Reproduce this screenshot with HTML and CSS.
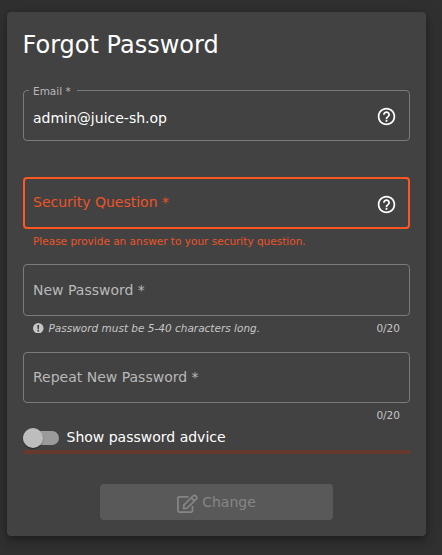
FILE: index.html
```html
<!DOCTYPE html>
<html lang="en">
<head>
<meta charset="utf-8">
<title>Forgot Password</title>
<link rel="stylesheet" href="styles.css">
</head>
<body>
<main class="card">
  <h1 class="title">Forgot Password</h1>
  <form class="form">
    <div class="field email">
      <span class="notch">Email *</span>
      <span class="value">admin@juice-sh.op</span>
      <svg class="help" viewBox="0 0 24 24"><path d="M11 18h2v-2h-2v2zm1-16C6.48 2 2 6.48 2 12s4.480 10 10 10 10-4.480 10-10S17.520 2 12 2zm0 18c-4.410 0-8-3.590-8-8s3.590-8 8-8 8 3.590 8 8-3.590 8-8 8zm0-14c-2.210 0-4 1.790-4 4h2c0-1.100.9-2 2-2s2 .9 2 2c0 2-3 1.750-3 5h2c0-2.250 3-2.500 3-5 0-2.210-1.790-4-4-4z"/></svg>
    </div>
    <div class="field question">
      <span class="label">Security Question *</span>
      <svg class="help" viewBox="0 0 24 24"><path d="M11 18h2v-2h-2v2zm1-16C6.48 2 2 6.48 2 12s4.480 10 10 10 10-4.480 10-10S17.520 2 12 2zm0 18c-4.410 0-8-3.590-8-8s3.590-8 8-8 8 3.590 8 8-3.590 8-8 8zm0-14c-2.210 0-4 1.790-4 4h2c0-1.100.9-2 2-2s2 .9 2 2c0 2-3 1.750-3 5h2c0-2.250 3-2.500 3-5 0-2.210-1.790-4-4-4z"/></svg>
    </div>
    <div class="sub error">Please provide an answer to your security question.</div>
    <div class="field password"><span class="label">New Password *</span></div>
    <div class="sub hint">
      <svg class="info" viewBox="0 0 10 10"><circle cx="5" cy="5" r="5"/><path d="M4.100 1.800h1.800l-.25 3.900h-1.300zM4.200 6.500h1.600v1.500H4.200z"/></svg>
      <em>Password must be 5-40 characters long.</em>
      <span class="count">0/20</span>
    </div>
    <div class="field repeat"><span class="label">Repeat New Password *</span></div>
    <div class="sub hint"><span class="count">0/20</span></div>
    <div class="toggle"><span class="track"><span class="thumb"></span></span><span>Show password advice</span></div>
    <div class="strength"></div>
    <button class="change" type="button" disabled>
      <svg class="edit" viewBox="0 0 21 19"><path d="M11.500 2.900H2.200Q.9 2.900.9 4.200V16.800Q.9 18.100 2.200 18.100H14.200Q15.500 18.100 15.500 16.800V12"/><path d="M6.800 11.200L16 2Q17.300.7 19 2.200Q20.500 3.800 19.200 5.100L10 14.300L6.800 14.600ZM14.200 3.800L17.300 6.900"/></svg>
      <span>Change</span>
    </button>
  </form>
</main>
</body>
</html>
```

FILE: styles.css
```css
* { box-sizing: border-box; }
body {
  margin: 0;
  height: 555px;
  overflow: hidden;
  background: #303030;
  color: #fff;
  font: 14px/20px "DejaVu Sans", sans-serif;
}
.card {
  width: 419px;
  height: 524px;
  margin: 12px 0 0 7px;
  padding: 17px 15px 0 16px;
  border-radius: 4px;
  background: #424242;
  box-shadow: 0 3px 5px -1px rgba(0,0,0,.2), 0 6px 10px rgba(0,0,0,.14), 0 1px 18px rgba(0,0,0,.12);
}
.title { margin: 0 0 0 -0.500px; font-size: 24px; line-height: 32px; font-weight: 400; }
.form { display: flex; flex-direction: column; }
.field {
  position: relative;
  display: flex;
  align-items: center;
  justify-content: space-between;
  width: 387px;
  height: 51px;
  padding: 0 12px 0 9px;
  border: 1px solid #7b7b7b;
  border-radius: 4px;
}
.email { margin-top: 29px; }
.value { padding-top: 4px; }
.notch {
  position: absolute;
  top: -7px;
  left: 5px;
  width: 48px;
  padding-left: 4px;
  background: #424242;
  color: #b9b9b9;
  font-size: 10.500px;
  line-height: 15px;
}
.help { width: 21px; height: 21px; margin-top: 2px; fill: #fff; }
.question {
  height: 52px;
  margin-top: 36px;
  padding: 0 11px 0 8px;
  border: 2px solid #ff5722;
}
.question .label { color: #ec5427; }
.label { color: #b9b9b9; position: relative; top: -1px; }
.password .label { top: 0; }
.sub {
  display: flex;
  align-items: center;
  height: 24px;
  padding: 0 10px;
  color: #c6c6c6;
  font-size: 10.500px;
  line-height: 20px;
}
.error { height: 35px; padding-bottom: 11px; color: #ec5427; }
.password { height: 52px; }
.hint { width: 387px; height: 36px; padding-bottom: 12px; }
.info { width: 10.500px; height: 10.500px; margin-right: 5px; fill: #c6c6c6; }
.info path { fill: #424242; }
.count { margin-left: auto; }
.toggle { display: flex; align-items: center; gap: 7.500px; height: 23px; margin-top: -12px; padding-bottom: 3px; }
.track {
  position: relative;
  width: 36px;
  height: 14px;
  margin-top: 2px;
  border-radius: 7px;
  background: #9b9b9b;
}
.thumb {
  position: absolute;
  top: -3px;
  left: 0;
  width: 20px;
  height: 20px;
  border-radius: 50%;
  background: #bdbdbd;
  box-shadow: 0 2px 1px -1px rgba(0,0,0,.2), 0 1px 1px rgba(0,0,0,.14), 0 1px 3px rgba(0,0,0,.12);
}
.strength { width: 387px; height: 4px; background: #65392e; }
.change {
  display: flex;
  align-items: center;
  justify-content: center;
  gap: 4px;
  width: 233px;
  height: 36px;
  margin: 30px 0 0 77px;
  padding: 0;
  border: 0;
  border-radius: 4px;
  background: #595959;
  color: #868686;
  font: inherit;
}
.edit { width: 21px; height: 19px; margin-top: 3px; fill: none; stroke: #868686; stroke-width: 1.700; }
```
